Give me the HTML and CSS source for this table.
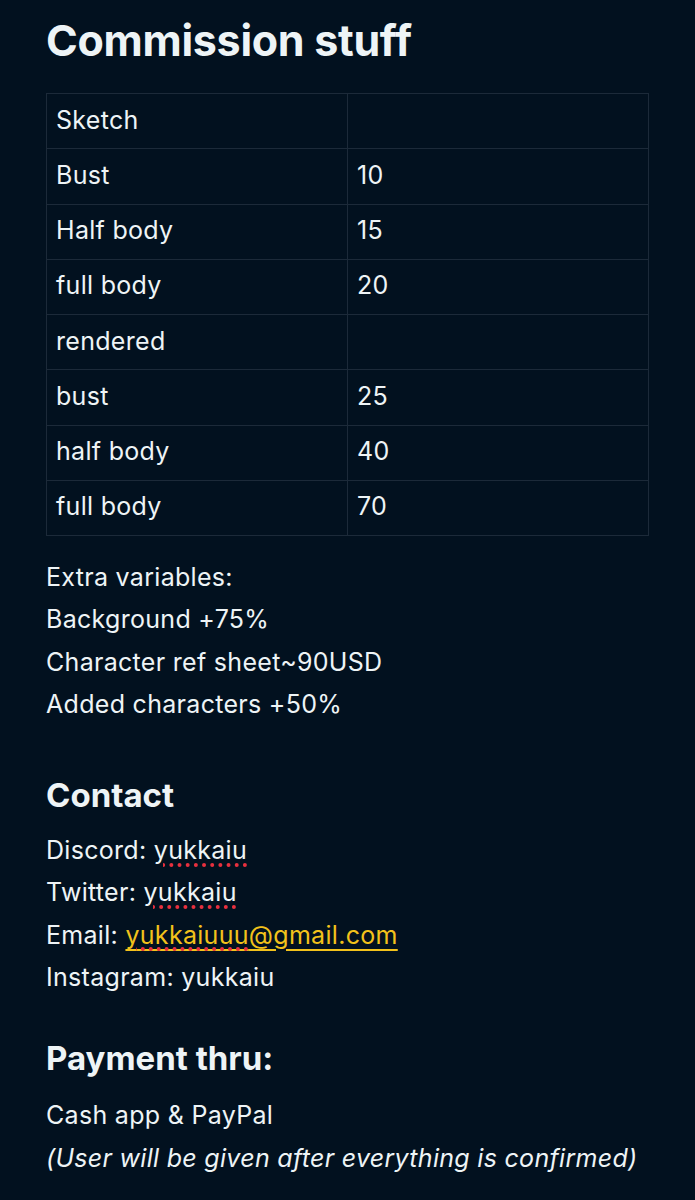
FILE: index.html
```html
<!DOCTYPE html>
<html>
<head>
<meta charset="utf-8">
<link rel="stylesheet" href="styles.css">
</head>
<body>
<main class="page">
  <h1 class="title">Commission stuff</h1>
  <table class="prices">
    <tr><td>Sketch</td><td></td></tr>
    <tr><td>Bust</td><td>10</td></tr>
    <tr><td>Half body</td><td>15</td></tr>
    <tr><td>full body</td><td>20</td></tr>
    <tr><td>rendered</td><td></td></tr>
    <tr><td>bust</td><td>25</td></tr>
    <tr><td>half body</td><td>40</td></tr>
    <tr><td>full body</td><td>70</td></tr>
  </table>
  <div class="lines extras">
    <p>Extra variables:</p>
    <p>Background +75%</p>
    <p>Character ref sheet~90USD</p>
    <p>Added characters +50%</p>
  </div>
  <h2 class="sub contact-h">Contact</h2>
  <div class="lines">
    <p>Discord: <span class="spell">yukkaiu</span></p>
    <p>Twitter: <span class="spell">yukkaiu</span></p>
    <p>Email: <a class="link" href="#"><span class="spell">yukkaiuuu</span>@gmail.com</a></p>
    <p>Instagram: yukkaiu</p>
  </div>
  <h2 class="sub pay-h">Payment thru:</h2>
  <div class="lines">
    <p>Cash app &amp; PayPal</p>
    <p class="it">(User will be given after everything is confirmed)</p>
  </div>
</main>
</body>
</html>
```

FILE: styles.css
```css
html, body {
  margin: 0;
  padding: 0;
  background: #02111f;
}
body {
  color: #eef4f6;
  font-family: Inter, "Noto Sans", sans-serif;
}
.page {
  padding: 14px 46px 0 46px;
}
.title {
  margin: 0;
  font-size: 43px;
  font-weight: 700;
  line-height: 52px;
  letter-spacing: -0.3px;
}
.prices {
  margin-top: 27px;
  width: 603px;
  border-collapse: collapse;
  font-size: 25px;
  letter-spacing: 0.3px;
}
.prices td {
  border: 1px solid #1c2a39;
  height: 51.25px;
  padding: 0 9px 3px 9px;
  width: 50%;
  vertical-align: middle;
}
.lines p {
  margin: 0;
  font-size: 25px;
  line-height: 42.3px;
  letter-spacing: 0.3px;
}
.extras {
  margin-top: 20px;
}
.sub {
  margin: 0;
  font-size: 33px;
  font-weight: 700;
  line-height: 40px;
  letter-spacing: 0;
}
.contact-h {
  margin-top: 50px;
  margin-bottom: 14px;
}
.pay-h {
  margin-top: 40px;
  margin-bottom: 16px;
}
.spell {
  text-decoration-line: underline;
  text-decoration-style: dotted;
  text-decoration-color: #e8303e;
  text-decoration-thickness: 3.5px;
  text-underline-offset: 4px;
}
.link {
  color: #f2c21b;
  text-decoration: underline;
  text-decoration-thickness: 2px;
  text-underline-offset: 5px;
}
.it {
  font-style: italic;
}
```
